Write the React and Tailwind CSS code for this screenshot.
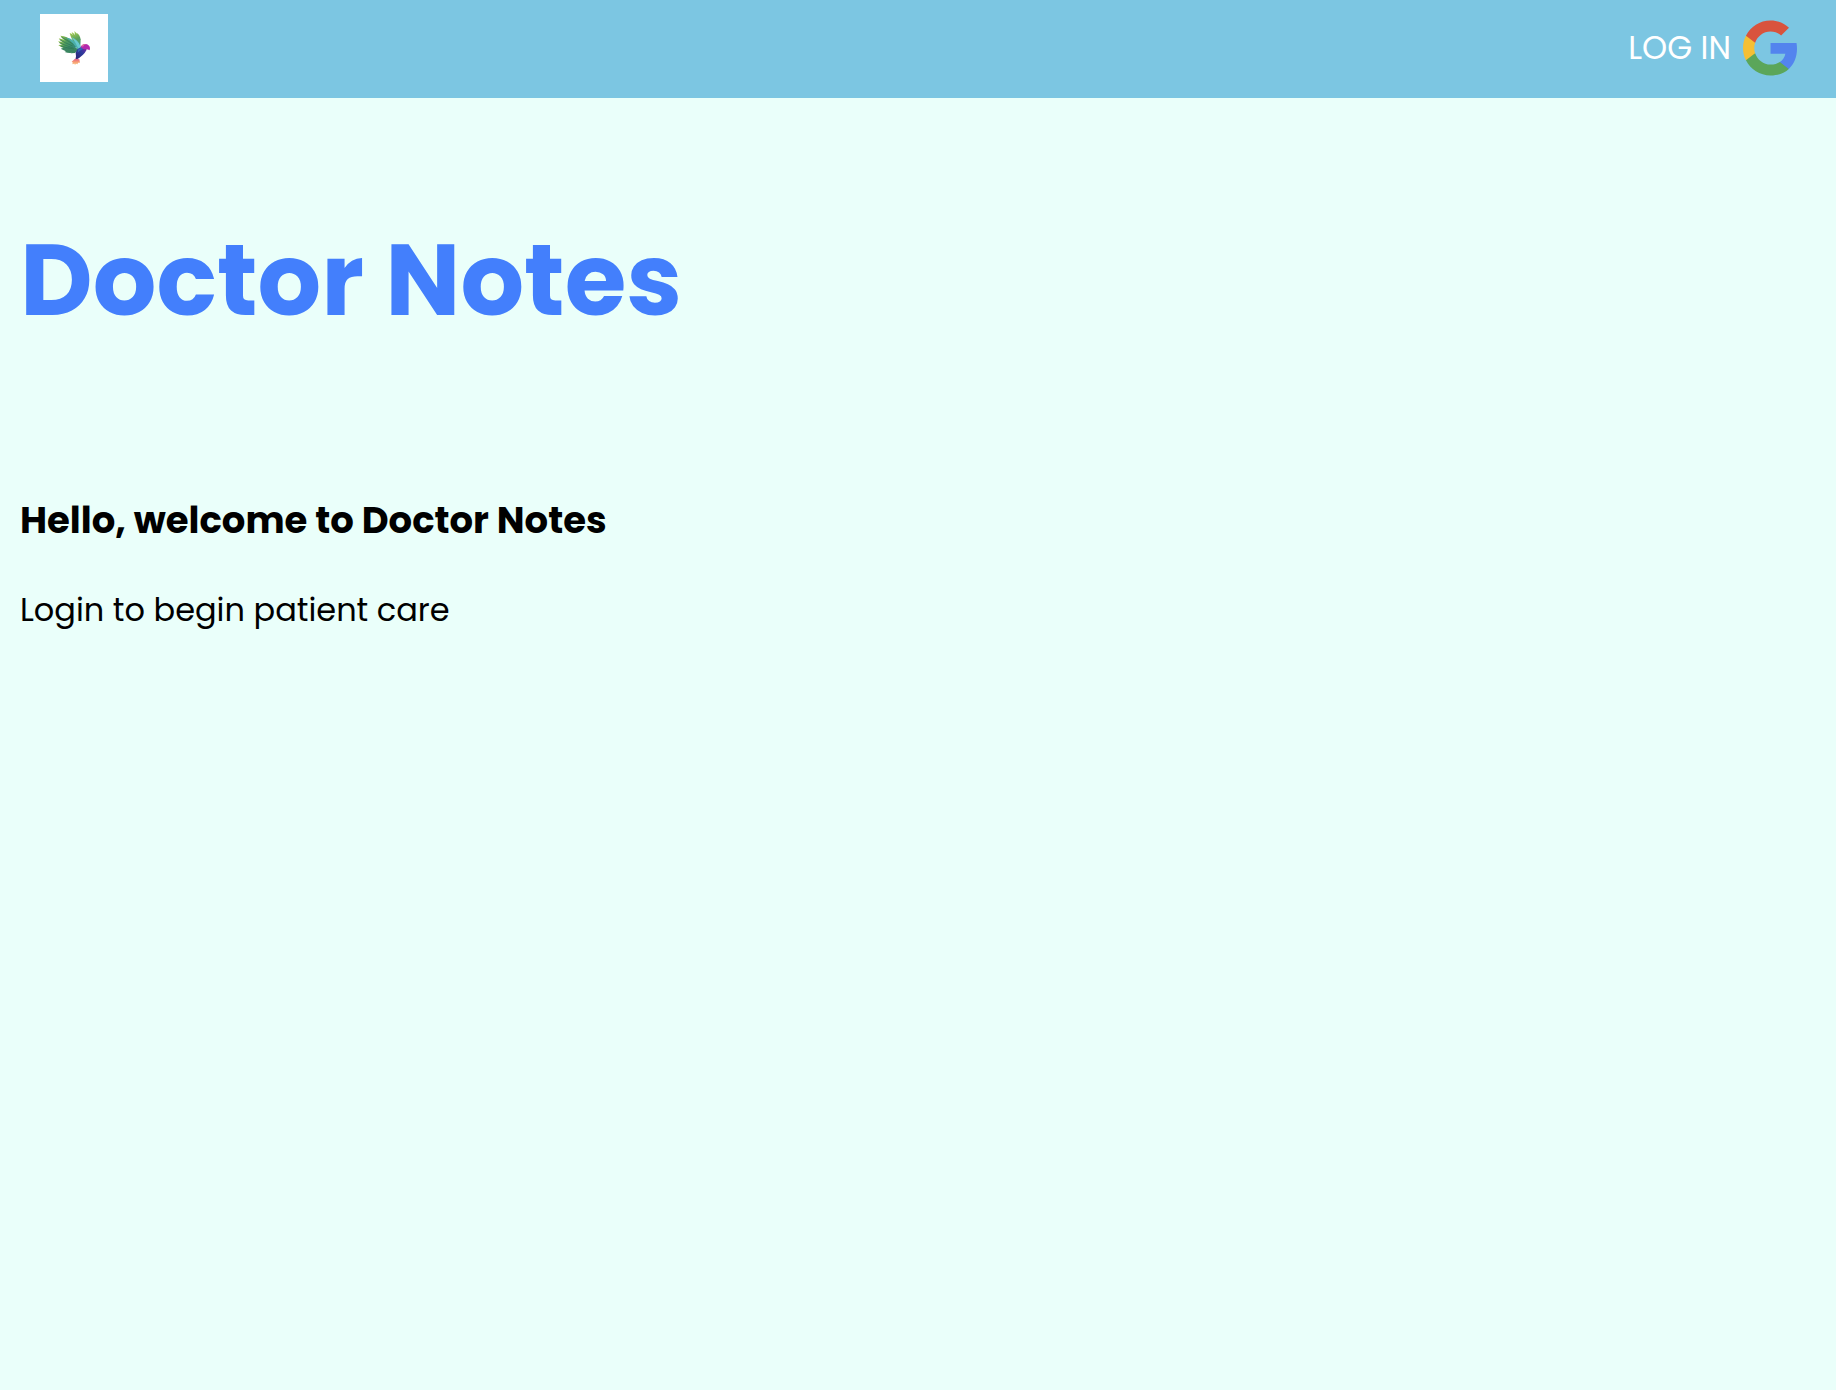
function BirdLogo() {
  return (
    <svg viewBox="0 0 204 204" className="size-[68px] bg-white" role="img" aria-label="Doctor Notes home">
      <defs>
        <linearGradient id="feather" gradientUnits="userSpaceOnUse" x1="56" y1="76" x2="112" y2="100">
          <stop offset="0" stopColor="#a3c94a" />
          <stop offset="0.4" stopColor="#4d9a5c" />
          <stop offset="1" stopColor="#2b8080" />
        </linearGradient>
        <linearGradient id="upper" gradientUnits="userSpaceOnUse" x1="100" y1="52" x2="118" y2="98">
          <stop offset="0" stopColor="#a9cd4c" />
          <stop offset="0.5" stopColor="#5ba15a" />
          <stop offset="1" stopColor="#3a9a8c" />
        </linearGradient>
        <linearGradient id="body" x1="1" y1="0" x2="0" y2="1">
          <stop offset="0" stopColor="#7a2aa8" />
          <stop offset="0.45" stopColor="#2b3a9c" />
          <stop offset="1" stopColor="#30206e" />
        </linearGradient>
        <linearGradient id="tail" x1="0" y1="0" x2="0" y2="1">
          <stop offset="0" stopColor="#e0568c" />
          <stop offset="0.5" stopColor="#f79a72" />
          <stop offset="1" stopColor="#fbd08c" />
        </linearGradient>
      </defs>
      <g fill="url(#upper)">
        <path d="M89 57 Q100 58 114 88 L108 92 Q94 78 89 57Z" />
        <path d="M95 54 Q108 60 118 90 L112 94 Q99 74 95 54Z" />
        <path d="M103 51 Q114 58 120 92 L114 92 Q104 70 103 51Z" />
        <path d="M109 56 Q119 60 122 76 L121 98 L115 92 Q109 72 109 56Z" />
      </g>
      <g fill="url(#feather)">
        <path d="M61 65 Q82 66 96 80 L112 100 L100 98 Q74 84 61 65Z" />
        <path d="M56 73 Q76 76 110 100 L98 102 Q68 90 56 73Z" />
        <path d="M54 82 Q72 82 108 102 L98 106 Q66 98 54 82Z" />
        <path d="M55 93 Q74 90 110 102 L98 109 Q70 106 55 93Z" />
      </g>
      <g fill="#3b8560">
        <path d="M62 104 Q80 96 112 103 L98 112 Q76 114 62 104Z" />
        <path d="M74 114 Q88 102 114 104 L104 114 Q90 120 74 114Z" />
        <path d="M92 118 Q98 108 116 104 L114 110 Q106 119 92 118Z" />
      </g>
      <path d="M64 69 Q80 78 100 91 M59 77 Q76 87 98 96 M58 86 Q76 95 98 101 M62 96 Q82 102 102 105" stroke="#2b7456" strokeWidth="2" fill="none" />
      <path d="M80 73 Q88 70 101 80 Q116 91 122 104 L114 111 Q106 90 80 73Z" fill="#4aaea9" />
      <path d="M95 70 Q114 78 121 96 L126 102 L117 108 Q109 88 95 70Z" fill="#67c8cf" />
      <path d="M112 106 Q124 95 136 99 L140 107 Q132 124 106 139 L108 127 Q105 116 112 106Z" fill="url(#body)" />
      <path d="M114 107 Q123 98 135 104 Q125 104 113 116Z" fill="#3463b4" />
      <path d="M122 99 Q126 90 136 90 Q148 91 150 102 L149 109 Q142 104 134 106 Q130 107 127 103Z" fill="#b329ad" />
      <path d="M124 96 Q130 88 140 91 Q132 91 129 98Z" fill="#df6e9b" />
      <path d="M105 134 L118 136 L120 146 L114 146 L113 151 L108 149 L105 153 L103 149 L97 151 L98 145 L95 143Z" fill="url(#tail)" />
    </svg>
  );
}

function GoogleIcon() {
  return (
    <svg viewBox="1 1 21.56 22" className="h-14 w-[54px]" aria-hidden="true">
      <path fill="#5384ee" d="M22.56 12.25c0-.78-.07-1.53-.2-2.25H12v4.26h5.92c-.26 1.37-1.04 2.53-2.21 3.31v2.77h3.57c2.08-1.92 3.28-4.74 3.28-8.09z" />
      <path fill="#5ba65a" d="M12 23c2.97 0 5.46-.98 7.28-2.66l-3.57-2.77c-.98.66-2.23 1.06-3.71 1.06-2.86 0-5.29-1.93-6.16-4.53H2.18v2.84C3.99 20.53 7.7 23 12 23z" />
      <path fill="#f4bf34" d="M5.84 14.09c-.22-.66-.35-1.36-.35-2.09s.13-1.43.35-2.09V7.07H2.18C1.43 8.55 1 10.22 1 12s.43 3.45 1.18 4.93l2.85-2.22.81-.62z" />
      <path fill="#d9533d" d="M12 5.38c1.62 0 3.06.56 4.21 1.64l3.15-3.15C17.45 2.09 14.97 1 12 1 7.7 1 3.99 3.47 2.18 7.07l3.66 2.84c.87-2.6 3.3-4.53 6.16-4.53z" />
    </svg>
  );
}

export default function App() {
  return (
    <div className="min-h-screen bg-[#eafffa] font-[Poppins,Inter,sans-serif] text-black">
      <header className="flex items-center justify-between bg-[#7cc6e2] pt-3.5 pr-[39px] pb-4 pl-10">
        <a href="#home">
          <BirdLogo />
        </a>
        <button type="button" className="flex items-center gap-3 text-[32px] leading-none text-white">
          LOG IN
          <GoogleIcon />
        </button>
      </header>
      <main className="px-5 pt-28">
        <h1 className="text-[100px] leading-[140px] font-bold text-[#437ffc]">Doctor Notes</h1>
        <h2 className="mt-36 text-[37px] leading-[52px] font-bold">Hello, welcome to Doctor Notes</h2>
        <p className="mt-10 text-[32px] leading-[48px]">Login to begin patient care</p>
      </main>
    </div>
  );
}
